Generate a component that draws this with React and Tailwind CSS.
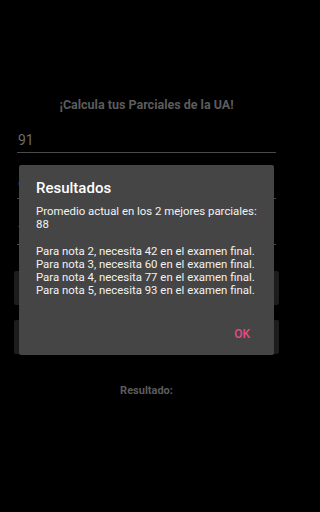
import React from 'react';

const font = { fontFamily: 'Roboto, "Noto Sans", sans-serif' };

function Field({ value, first }) {
  return (
    <div className={first ? 'mx-[3px] pt-[17px]' : 'mx-[3px] pt-[24px]'}>
      <div className="text-[14px] leading-[18px] text-[#6b6b6b] pl-[1px]">{value}</div>
      <div className="mt-[3px] h-[1px] bg-[#4a4a4a]" />
    </div>
  );
}

export default function App() {
  const lines = [
    'Para nota 2, necesita 42 en el examen final.',
    'Para nota 3, necesita 60 en el examen final.',
    'Para nota 4, necesita 77 en el examen final.',
    'Para nota 5, necesita 93 en el examen final.'
  ];

  return (
    <div className="relative w-full min-w-[293px] h-[512px] bg-black overflow-hidden" style={font}>
      {/* Page behind the dialog (dimmed) */}
      <div className="w-[293px] flex flex-col px-[14px] pt-[96px]">
        <h1 className="text-center text-[12.5px] leading-[18px] font-bold text-[#5c5c5c]">
          ¡Calcula tus Parciales de la UA!
        </h1>
        <Field value="91" first />
        <Field value="92" />
        <Field value="70" />
        <div className="mt-[26px] h-[34px] rounded-[2px] bg-[#1e1e1e]" />
        <div className="mt-[15px] h-[34px] rounded-[2px] bg-[#1e1e1e]" />
        <div className="mt-[29px] text-center text-[11px] leading-[16px] font-bold text-[#5c5c5c]">Resultado:</div>
      </div>

      {/* Dialog */}
      <div className="absolute left-[19px] top-[165px] w-[255px] h-[190px] rounded-[2px] bg-[#454545] shadow-lg flex flex-col">
        <div className="pl-[17px] pr-[8px] pt-[13px]">
          <div className="text-[15px] leading-[20px] font-medium text-white">Resultados</div>
          <div className="mt-[7px] text-[11.4px] leading-[13.3px] text-[#f2f2f2]">
            <div>Promedio actual en los 2 mejores parciales:</div>
            <div>88</div>
            <div className="h-[13px]" />
            {lines.map((l, i) => (
              <div key={i}>{l}</div>
            ))}
          </div>
        </div>
        <div className="mt-auto flex justify-end px-[24px] pb-[12px]">
          <span className="text-[12px] font-medium text-[#e84a86]">OK</span>
        </div>
      </div>
    </div>
  );
}
